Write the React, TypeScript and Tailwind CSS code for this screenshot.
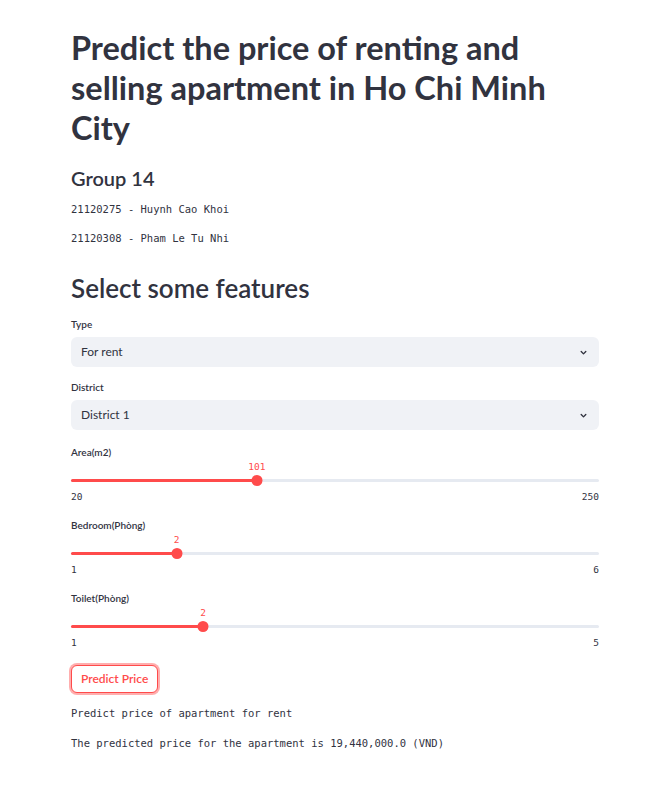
import { useState } from "react";

const sans = "font-['Lato','Noto_Sans',sans-serif]";
const mono = "font-['DejaVu_Sans_Mono','Liberation_Mono',monospace]";

function Select({ label, value, mt }: { label: string; value: string; mt: string }) {
  return (
    <div className={mt}>
      <div className="text-[10px] leading-[14px] font-semibold text-[#31333F]">{label}</div>
      <div className="mt-[6px] h-[30px] rounded-md bg-[#F0F2F6] flex items-center justify-between pl-[10px] pr-[10px]">
        <span className="text-[12px] text-[#31333F]">{value}</span>
        <svg width="11" height="11" viewBox="0 0 24 24" fill="none" stroke="#31333F" strokeWidth="3" strokeLinecap="round" strokeLinejoin="round">
          <path d="M7 10l5 5 5-5" />
        </svg>
      </div>
    </div>
  );
}

function Slider({ label, min, max, value, mt }: { label: string; min: number; max: number; value: number; mt: string }) {
  const pct = ((value - min) / (max - min)) * 100;
  return (
    <div className={mt}>
      <div className="text-[10px] leading-[14px] font-semibold text-[#31333F]">{label}</div>
      <div className="pt-[2px]">
        <div className="relative h-[12px]">
          <span
            className={`absolute -translate-x-1/2 text-[9.5px] leading-[12px] text-[#FF4B4B] ${mono}`}
            style={{ left: `${pct}%` }}
          >
            {value}
          </span>
        </div>
        <div className="relative h-[15px] flex items-center">
          <div className="w-full h-[3px] rounded-full bg-[#E6EAF1]">
            <div className="h-full rounded-full bg-[#FF4B4B]" style={{ width: `${pct}%` }} />
          </div>
          <div
            className="absolute w-[11px] h-[11px] rounded-full bg-[#FF4B4B] -translate-x-1/2"
            style={{ left: `${pct}%` }}
          />
        </div>
        <div className={`mt-[3px] h-[12px] flex justify-between text-[9.5px] leading-[12px] text-[#31333F] ${mono}`}>
          <span>{min}</span>
          <span>{max}</span>
        </div>
      </div>
    </div>
  );
}

export default function App() {
  const [shown] = useState(true);

  return (
    <div className={`min-h-[787px] bg-white text-[#31333F] ${sans}`}>
      <div className="pl-[71px] pr-[67px] pt-[28px] pb-[30px]">
        <h1 className="text-[32.5px] leading-[40px] font-bold">
          Predict the price of renting and selling apartment in Ho Chi Minh City
        </h1>

        <h3 className="mt-[18px] text-[20px] leading-[24px] font-semibold">Group 14</h3>
        <p className={`mt-[11px] text-[10.5px] leading-[16px] ${mono}`}>21120275 - Huynh Cao Khoi</p>
        <p className={`mt-[13px] text-[10.5px] leading-[16px] ${mono}`}>21120308 - Pham Le Tu Nhi</p>

        <h2 className="mt-[25px] text-[26px] leading-[34px] font-semibold">Select some features</h2>

        <Select label="Type" value="For rent" mt="mt-[12px]" />
        <Select label="District" value="District 1" mt="mt-[13px]" />

        <Slider label="Area(m2)" min={20} max={250} value={101} mt="mt-[15px]" />
        <Slider label="Bedroom(Phòng)" min={1} max={6} value={2} mt="mt-[15px]" />
        <Slider label="Toilet(Phòng)" min={1} max={5} value={2} mt="mt-[15px]" />

        <button className="mt-[16px] h-[28px] px-[9px] rounded-md border border-[#FF4B4B] shadow-[0_0_0_2px_rgba(255,75,75,0.45)] text-[12px] font-semibold text-[#FF4B4B] bg-white">
          Predict Price
        </button>

        {shown && (
          <>
            <p className={`mt-[12px] text-[10.5px] leading-[16px] ${mono}`}>Predict price of apartment for rent</p>
            <p className={`mt-[14px] text-[10.5px] leading-[16px] ${mono}`}>
              The predicted price for the apartment is 19,440,000.0 (VND)
            </p>
          </>
        )}
      </div>
    </div>
  );
}
